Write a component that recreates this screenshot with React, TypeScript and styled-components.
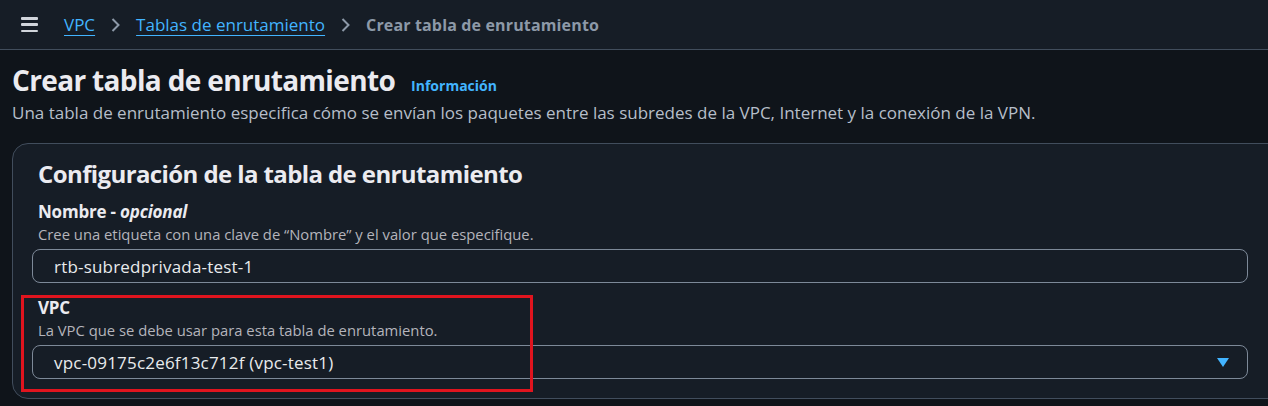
import React from 'react';
import styled, { createGlobalStyle } from 'styled-components';

const GlobalStyle = createGlobalStyle`
  html, body {
    margin: 0;
    padding: 0;
    background: #0f141a;
    overflow: hidden;
  }
  body {
    font-family: "Open Sans", "Noto Sans", sans-serif;
    color: #dedee3;
  }
`;

const Bar = styled.header`
  height: 49px;
  display: flex;
  align-items: center;
  gap: 26px;
  padding-left: 21px;
  background: #161d26;
  border-bottom: 1px solid #414d5c;
`;

const Burger = styled.button`
  width: 17px;
  height: 15px;
  padding: 0;
  border: none;
  background: transparent;
  display: flex;
  flex-direction: column;
  justify-content: space-between;

  span {
    display: block;
    height: 2.5px;
    background: #d1d5db;
    border-radius: 1px;
  }
`;

const Crumbs = styled.nav`
  display: flex;
  align-items: center;
  gap: 16px;
  font-size: 17px;
`;

const CrumbLink = styled.a`
  color: #42b4ff;
  text-decoration: underline;
  text-underline-offset: 4px;
  text-decoration-thickness: 1px;
`;

const CrumbCurrent = styled.span`
  color: #8d99a8;
  font-weight: 700;
  font-size: 16px;
  letter-spacing: 0.15px;
`;

const Page = styled.main`
  padding: 12px 0 0 12px;
`;

const TitleRow = styled.div`
  display: flex;
  align-items: baseline;
  gap: 16px;
`;

const Title = styled.h1`
  margin: 0;
  font-size: 28px;
  line-height: 36px;
  font-weight: 700;
  letter-spacing: -0.65px;
  color: #ebebf0;
`;

const InfoLink = styled.a`
  color: #42b4ff;
  font-size: 14px;
  font-weight: 700;
`;

const Lead = styled.p`
  margin: 4px 0 0;
  font-size: 17px;
  line-height: 22px;
  color: #b6bec9;
`;

const Card = styled.section`
  margin: 19px -40px 0 0;
  padding: 14px 59px 19px 19px;
  background: #161d26;
  border: 1px solid #414d5c;
  border-radius: 16px;
`;

const CardTitle = styled.h2`
  margin: 0 0 11px 6px;
  font-size: 24px;
  line-height: 32px;
  font-weight: 700;
  letter-spacing: -0.6px;
  color: #ebebf0;
`;

const Field = styled.div`
  display: flex;
  flex-direction: column;
  & + & {
    margin-top: 14px;
  }
`;

const Label = styled.label`
  padding-left: 6px;
  font-size: 17px;
  line-height: 22px;
  font-weight: 700;
  letter-spacing: -0.2px;
  color: #ebebf0;

  em {
    font-weight: 700;
  }
`;

const Hint = styled.span`
  padding-left: 6px;
  margin-top: 1px;
  font-size: 14.8px;
  line-height: 20px;
  color: #b4b4bb;
`;

const Box = styled.div`
  margin-top: 5px;
  height: 34px;
  box-sizing: border-box;
  display: flex;
  align-items: center;
  justify-content: space-between;
  padding: 0 18px 0 21px;
  border: 1px solid #7d8998;
  border-radius: 8px;
  font-size: 17px;
  letter-spacing: 0.2px;
  color: #e9ebed;
`;

const Caret = styled.span`
  width: 0;
  height: 0;
  border-left: 6.5px solid transparent;
  border-right: 6.5px solid transparent;
  border-top: 9px solid #42b4ff;
`;

const Marked = styled.div`
  position: relative;
`;

const Highlight = styled.div`
  position: absolute;
  left: -11px;
  top: -2px;
  width: 512px;
  height: 97px;
  box-sizing: border-box;
  border: 3px solid #e0141e;
  pointer-events: none;
`;

function Chevron() {
  return (
    <svg width="9" height="14" viewBox="0 0 9 14">
      <polyline points="1.5,1 7.5,7 1.5,13" fill="none" stroke="#8d99a8" strokeWidth="2" />
    </svg>
  );
}

export default function App() {
  return (
    <>
      <GlobalStyle />
      <Bar>
        <Burger aria-label="Menú">
          <span />
          <span />
          <span />
        </Burger>
        <Crumbs>
          <CrumbLink>VPC</CrumbLink>
          <Chevron />
          <CrumbLink>Tablas de enrutamiento</CrumbLink>
          <Chevron />
          <CrumbCurrent>Crear tabla de enrutamiento</CrumbCurrent>
        </Crumbs>
      </Bar>
      <Page>
        <TitleRow>
          <Title>Crear tabla de enrutamiento</Title>
          <InfoLink>Información</InfoLink>
        </TitleRow>
        <Lead>
          Una tabla de enrutamiento especifica cómo se envían los paquetes entre las subredes de la VPC, Internet y la conexión de la VPN.
        </Lead>
        <Card>
          <CardTitle>Configuración de la tabla de enrutamiento</CardTitle>
          <Field>
            <Label>
              Nombre - <em>opcional</em>
            </Label>
            <Hint>Cree una etiqueta con una clave de “Nombre” y el valor que especifique.</Hint>
            <Box>rtb-subredprivada-test-1</Box>
          </Field>
          <Field>
            <Marked>
              <Highlight />
              <Label>VPC</Label>
            </Marked>
            <Hint>La VPC que se debe usar para esta tabla de enrutamiento.</Hint>
            <Box>
              vpc-09175c2e6f13c712f (vpc-test1)
              <Caret />
            </Box>
          </Field>
        </Card>
      </Page>
    </>
  );
}
